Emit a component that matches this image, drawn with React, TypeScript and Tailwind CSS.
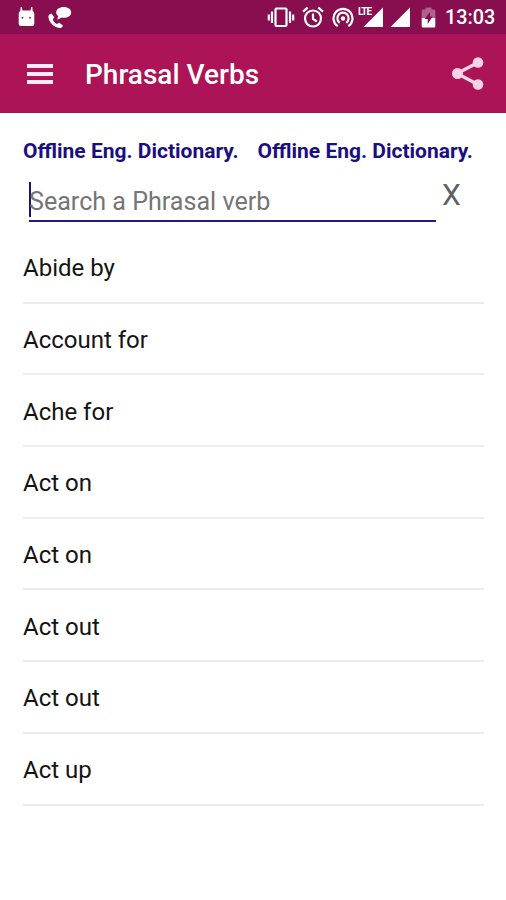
import React from "react";

const verbs = [
  "Abide by",
  "Account for",
  "Ache for",
  "Act on",
  "Act on",
  "Act out",
  "Act out",
  "Act up",
];

const StatusBar = () => {
  return (
    <div className="flex h-[34px] items-center justify-between bg-[#880e4f] pl-[18px] pr-[11px] text-white">
      <div className="flex items-center gap-[13px]">
        <svg width="17" height="20" viewBox="0 0 17 20" fill="currentColor">
          <path d="M2.700 0h1l.8 3.500h8l.8-3.500h1l.4 4Q16.300 4.500 16.300 7v9.500q0 2.500-2.500 2.500H3.200Q.7 19 .7 16.500V7q0-2.500 1.600-3z" />
          <circle cx="4.500" cy="10.700" r=".9" fill="#880e4f" />
          <circle cx="12" cy="10.700" r=".9" fill="#880e4f" />
        </svg>
        <svg width="24" height="23" viewBox="0 0 24 23" fill="currentColor">
          <path d="M3.500 7.500C1.500 7.700.2 9.200.4 11c.6 5.700 5.500 10.200 11 11 1.800.2 3.400-.9 3.400-2.800l-3.700-2.400-2.300 1.200c-1.800-1-3.300-2.700-4-4.600l1.500-2.200z" />
          <path d="M15.700 1c4.400 0 7.500 2.300 7.500 5.400s-3.100 5.300-7.500 5.300c-.6 0-1.200 0-1.800-.2L9.200 13.700l1-3.800C8.900 9.100 8.200 7.800 8.200 6.400 8.200 3.300 11.300 1 15.700 1z" />
        </svg>
      </div>

      <div className="flex items-center">
        <svg
          width="28"
          height="22"
          viewBox="0 0 28 22"
          fill="none"
          stroke="currentColor"
          strokeWidth="2.2"
        >
          <rect x="8.500" y="2.500" width="11" height="17.500" rx="1" />
          <path d="M5 5.500v11.500M1.800 8.500v6M23 5.500v11.500M26.200 8.500v6" />
        </svg>
        <svg
          className="ml-[7px]"
          width="22"
          height="22"
          viewBox="0 0 22 22"
          fill="none"
          stroke="currentColor"
          strokeWidth="2.200"
        >
          <circle cx="11" cy="12.500" r="8" />
          <path d="M11 7.500v5.500l3.800 2.500M1 5.600l4.700-4M21 5.600l-4.700-4" />
        </svg>
        <svg
          className="ml-[8px]"
          width="22"
          height="22"
          viewBox="0 0 22 22"
          fill="none"
          stroke="currentColor"
          strokeWidth="2.200"
        >
          <path d="M5.700 20.200a9.500 9.500 0 1 1 10.600 0" />
          <path d="M7.700 16.800a5.600 5.600 0 1 1 6.600 0" />
          <circle cx="11" cy="12.500" r="2.200" fill="currentColor" stroke="none" />
        </svg>
        <div className="relative ml-[9px] h-[20px] w-[20px]">
          <svg width="20" height="20" viewBox="0 0 20 20" fill="currentColor">
            <path d="M20 .5V20H.5z" />
          </svg>
          <div className="absolute left-[-5px] top-0 bg-[#880e4f] pr-px font-['Roboto'] text-[10px] font-bold leading-[10px] tracking-[-1px]">
            LTE
          </div>
        </div>
        <svg
          className="ml-[7px]"
          width="20"
          height="20"
          viewBox="0 0 20 20"
          fill="currentColor"
        >
          <path d="M20 .5V20H.5z" />
        </svg>
        <svg
          className="ml-[11px]"
          width="15"
          height="22"
          viewBox="0 0 15 22"
          fill="currentColor"
        >
          <path
            d="M4.500 1.500h6v2H13q1.300 0 1.300 1.300V12H.7V4.800Q.7 3.500 2 3.500h2.500z"
            opacity=".35"
          />
          <path d="M.7 12h13.600v8.200q0 1.300-1.300 1.300H2q-1.300 0-1.300-1.300z" />
          <path d="M9 6 3.500 13h3.200v5l5-7.500H9z" fill="#880e4f" />
        </svg>
        <div className="ml-[9px] w-[50px] whitespace-nowrap pt-[2px] text-[19.8px] font-medium leading-[24px]">
          13:03
        </div>
      </div>
    </div>
  );
};

const Toolbar = () => {
  return (
    <div className="flex h-[79px] items-center border-b border-[#9c1448] bg-[#ad1457] pl-[27px] pr-[22px] text-white">
      <div className="flex w-[26px] flex-col gap-[4px] pt-px">
        <div className="h-[4px] bg-[#fdeaf2]" />
        <div className="h-[4px] bg-[#fdeaf2]" />
        <div className="h-[4px] bg-[#fdeaf2]" />
      </div>
      <div className="ml-[32px] flex-1 pt-[4px] text-[28px] font-medium leading-[34px]">
        Phrasal Verbs
      </div>
      <svg width="33" height="34" viewBox="0 0 33 34" fill="#fad4e6">
        <path
          d="M27 6.500 6 17.500l21 11"
          fill="none"
          stroke="#fad4e6"
          strokeWidth="3.300"
        />
        <circle cx="27" cy="6.500" r="5.300" />
        <circle cx="6.500" cy="17.500" r="5.500" />
        <circle cx="27" cy="28.500" r="5.300" />
      </svg>
    </div>
  );
};

export default function App() {
  return (
    <div className="h-[900px] w-[506px] overflow-hidden bg-white font-['Roboto',sans-serif]">
      <StatusBar />
      <Toolbar />

      <div className="px-[23px] pt-[25px]">
        <div className="flex gap-[19px] whitespace-nowrap text-[21px] font-bold leading-[26px] text-[#1a0f80]">
          <div>Offline Eng. Dictionary.</div>
          <div>Offline Eng. Dictionary.</div>
        </div>

        <div className="flex pl-[6px] pt-[17px]">
          <div className="flex h-[41px] w-[407px] items-start border-b-2 border-[#1f1a8c] text-[25.1px] text-[#757575]">
            <div className="mr-[-2px] mt-px h-[35px] w-[2px] bg-[#1a0f80]" />
            <div className="leading-[42px]">Search a Phrasal verb</div>
          </div>
          <div className="ml-[6px] text-[30px] leading-[28px] text-[#616161]">
            X
          </div>
        </div>

        <div className="mt-[10px] w-[461px]">
          {verbs.map((verb, i) => (
            <div
              key={i}
              className="flex h-[71.7px] items-center border-b-2 border-[#ececec] pt-[3px] text-[24px] leading-[30px] text-[#141414]"
            >
              {verb}
            </div>
          ))}
        </div>
      </div>
    </div>
  );
}
